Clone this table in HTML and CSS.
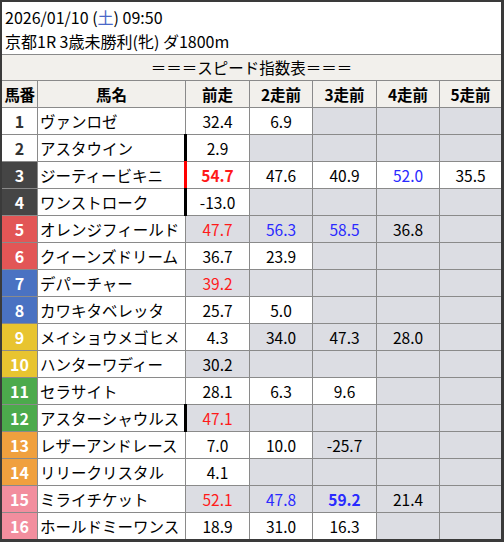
FILE: index.html
```html
<!DOCTYPE html>
<html lang="ja">
<head>
<meta charset="utf-8">
<title>スピード指数表</title>
<link rel="stylesheet" href="styles.css">
</head>
<body>
<div class="frame">
  <div class="info">
    <div class="line">2026/01/10 (<span class="sat">土</span>) 09:50</div>
    <div class="line">京都1R 3歳未勝利(牝) ダ1800m</div>
  </div>
  <div class="sheet">
    <div class="title">＝＝＝スピード指数表＝＝＝</div>

    <div class="hd num-h">馬番</div>
    <div class="hd">馬名</div>
    <div class="hd">前走</div>
    <div class="hd">2走前</div>
    <div class="hd">3走前</div>
    <div class="hd">4走前</div>
    <div class="hd">5走前</div>

    <div class="n f1">1</div><div class="name">ヴァンロゼ</div>
    <div class="c">32.4</div><div class="c">6.9</div><div class="c g"></div><div class="c g"></div><div class="c g"></div>

    <div class="n f1">2</div><div class="name">アスタウイン</div>
    <div class="c mark">2.9</div><div class="c g"></div><div class="c g"></div><div class="c g"></div><div class="c g"></div>

    <div class="n f2">3</div><div class="name">ジーティービキニ</div>
    <div class="c mark mark-red r bold">54.7</div><div class="c">47.6</div><div class="c">40.9</div><div class="c b">52.0</div><div class="c">35.5</div>

    <div class="n f2">4</div><div class="name">ワンストローク</div>
    <div class="c mark">-13.0</div><div class="c g"></div><div class="c g"></div><div class="c g"></div><div class="c g"></div>

    <div class="n f3">5</div><div class="name">オレンジフィールド</div>
    <div class="c g r">47.7</div><div class="c g b">56.3</div><div class="c g b">58.5</div><div class="c g">36.8</div><div class="c g"></div>

    <div class="n f3">6</div><div class="name">クイーンズドリーム</div>
    <div class="c">36.7</div><div class="c">23.9</div><div class="c g"></div><div class="c g"></div><div class="c g"></div>

    <div class="n f4">7</div><div class="name">デパーチャー</div>
    <div class="c g r">39.2</div><div class="c g"></div><div class="c g"></div><div class="c g"></div><div class="c g"></div>

    <div class="n f4">8</div><div class="name">カワキタベレッタ</div>
    <div class="c">25.7</div><div class="c">5.0</div><div class="c g"></div><div class="c g"></div><div class="c g"></div>

    <div class="n f5">9</div><div class="name">メイショウメゴヒメ</div>
    <div class="c">4.3</div><div class="c g">34.0</div><div class="c g">47.3</div><div class="c g">28.0</div><div class="c g"></div>

    <div class="n f5">10</div><div class="name">ハンターワディー</div>
    <div class="c g">30.2</div><div class="c g"></div><div class="c g"></div><div class="c g"></div><div class="c g"></div>

    <div class="n f6">11</div><div class="name">セラサイト</div>
    <div class="c">28.1</div><div class="c">6.3</div><div class="c">9.6</div><div class="c g"></div><div class="c g"></div>

    <div class="n f6">12</div><div class="name">アスターシャウルス</div>
    <div class="c g r mark">47.1</div><div class="c g"></div><div class="c g"></div><div class="c g"></div><div class="c g"></div>

    <div class="n f7">13</div><div class="name">レザーアンドレース</div>
    <div class="c">7.0</div><div class="c">10.0</div><div class="c g">-25.7</div><div class="c g"></div><div class="c g"></div>

    <div class="n f7">14</div><div class="name">リリークリスタル</div>
    <div class="c">4.1</div><div class="c g"></div><div class="c g"></div><div class="c g"></div><div class="c g"></div>

    <div class="n f8">15</div><div class="name">ミライチケット</div>
    <div class="c g r">52.1</div><div class="c g b">47.8</div><div class="c g b bold">59.2</div><div class="c g">21.4</div><div class="c g"></div>

    <div class="n f8">16</div><div class="name">ホールドミーワンス</div>
    <div class="c">18.9</div><div class="c">31.0</div><div class="c">16.3</div><div class="c g"></div><div class="c g"></div>
  </div>
</div>
</body>
</html>
```

FILE: styles.css
```css
html, body {
  margin: 0;
  padding: 0;
  background: #3a3a3a;
}

.frame {
  box-sizing: border-box;
  width: 504px;
  height: 542px;
  border-style: solid;
  border-color: #3a3a3a;
  border-width: 2px 3px 3px 2px;
  background: #ffffff;
  font-family: "Noto Sans CJK JP", "Noto Sans", sans-serif;
  color: #000;
  overflow: hidden;
}

.info {
  box-sizing: border-box;
  height: 53px;
  padding: 3px 0 0 3px;
  border-bottom: 1px solid #8a8a8a;
  font-size: 16px;
  line-height: 24px;
}

.sat {
  color: #4a68c8;
}

.sheet {
  display: grid;
  grid-template-columns: 35px 147px 63px 62px 63px 62px 61px;
  grid-template-rows: 25px 26px repeat(16, 26px);
  gap: 1px;
  background: #8a8a8a;
  font-size: 15.5px;
}

.title {
  grid-column: 1 / -1;
  background: #f2f0ec;
  text-align: center;
  line-height: 25px;
}

.hd {
  background: #f2f0ec;
  font-weight: bold;
  text-align: center;
  line-height: 26px;
  white-space: nowrap;
}

.num-h {
  letter-spacing: -0.5px;
}

.n {
  font-weight: bold;
  text-align: center;
  line-height: 26px;
  color: #fff;
  font-size: 16px;
}

.f1 { background: #ffffff; color: #333; }
.f2 { background: #454545; }
.f3 { background: #e25656; }
.f4 { background: #4a72c2; }
.f5 { background: #e8c430; }
.f6 { background: #4caa4c; }
.f7 { background: #f0a03e; }
.f8 { background: #f28e9e; }

.name {
  background: #ffffff;
  padding-left: 2px;
  line-height: 26px;
  white-space: nowrap;
  overflow: hidden;
}

.c {
  position: relative;
  background: #ffffff;
  text-align: center;
  line-height: 26px;
}

.g { background: #dcdde3; }
.r { color: #ff1a1a; }
.b { color: #2a2aff; }
.bold { font-weight: bold; }

.mark::before {
  content: "";
  position: absolute;
  left: -2px;
  top: -1px;
  bottom: -1px;
  width: 3px;
  background: #000;
}

.mark-red::before {
  background: #ff0000;
}
```
